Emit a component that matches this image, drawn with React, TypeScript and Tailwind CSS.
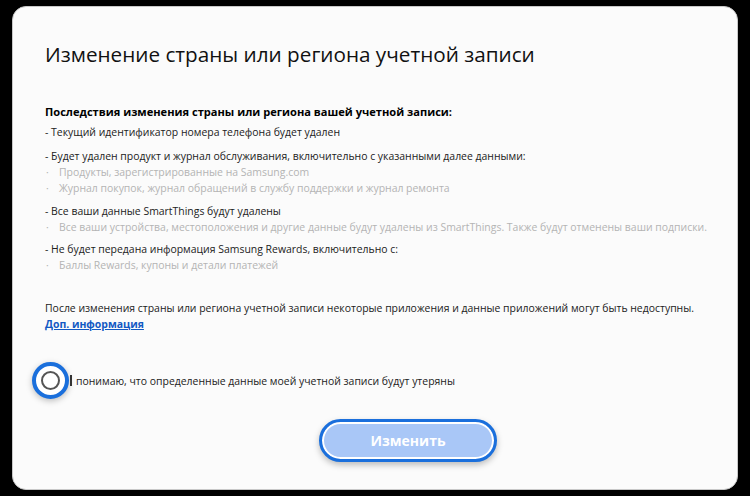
import { useState } from "react"

const sub = "text-[10.45px] leading-[16px] text-[#b4b4b4] flex"
const line = "text-[10.45px] leading-[16px] text-[#222]"

function Bullet({ children }: { children: string }) {
  return (
    <div className={sub}>
      <span className="w-[14px] pl-[1px]">·</span>
      <span>{children}</span>
    </div>
  )
}

export default function App() {
  const [checked, setChecked] = useState(false)

  return (
    <div className="w-[750px] h-[496px] bg-black pt-[6px] pl-[12px]" style={{ fontFamily: "'Open Sans', 'Noto Sans', sans-serif" }}>
      <div className="w-[726px] h-[484px] bg-[#fbfbfb] rounded-[14px] border border-[#c8c8c8] pl-[32px] pr-[16px] pt-[32px] flex flex-col">
        {/* Заголовок */}
        <h1 className="text-[20.7px] leading-[30px] text-[#111] font-normal">
          Изменение страны или региона учетной записи
        </h1>

        <div className="mt-[35px] text-[11.1px] leading-[16px] font-bold text-black">
          Последствия изменения страны или региона вашей учетной записи:
        </div>

        <div className={`mt-[4px] ${line}`}>
          - Текущий идентификатор номера телефона будет удален
        </div>

        <div className={`mt-[8px] ${line}`}>
          - Будет удален продукт и журнал обслуживания, включительно с указанными далее данными:
        </div>
        <Bullet>Продукты, зарегистрированные на Samsung.com</Bullet>
        <Bullet>Журнал покупок, журнал обращений в службу поддержки и журнал ремонта</Bullet>

        <div className={`mt-[7px] ${line}`}>
          - Все ваши данные SmartThings будут удалены
        </div>
        <Bullet>Все ваши устройства, местоположения и другие данные будут удалены из SmartThings. Также будут отменены ваши подписки.</Bullet>

        <div className={`mt-[6px] ${line}`}>
          - Не будет передана информация Samsung Rewards, включительно с:
        </div>
        <Bullet>Баллы Rewards, купоны и детали платежей</Bullet>

        <div className={`mt-[27px] ${line} whitespace-nowrap`}>
          После изменения страны или региона учетной записи некоторые приложения и данные приложений могут быть недоступны.
        </div>
        <a href="#" className="text-[10.45px] leading-[16px] font-bold text-[#1259c3] underline w-fit">
          Доп. информация
        </a>

        {/* Чекбокс */}
        <label className="mt-[30px] -ml-[13px] flex items-center gap-[1px] cursor-pointer w-fit">
          <span
            onClick={() => setChecked(!checked)}
            className="w-[37px] h-[37px] rounded-full border-[4px] border-[#1a6fdc] bg-white shadow-[0_2px_6px_rgba(0,0,0,0.25)] flex items-center justify-center"
          >
            <span className="w-[19px] h-[19px] rounded-full border-2 border-[#555]" />
          </span>
          <span className={line}>
            <span className="inline-block w-[2px] h-[11px] bg-[#333] mr-[4px] align-[-1px]" />
            понимаю, что определенные данные моей учетной записи будут утеряны
          </span>
        </label>

        <div className="mt-[20px] flex pl-[274px]">
          <button className="w-[178px] h-[43px] rounded-full border-[3px] border-[#1a6fdc] bg-[#a9c7f7] shadow-[0_3px_6px_rgba(0,0,0,0.25),inset_0_0_0_2px_#fff] text-white text-[14px] font-bold">
            Изменить
          </button>
        </div>
      </div>
    </div>
  )
}
